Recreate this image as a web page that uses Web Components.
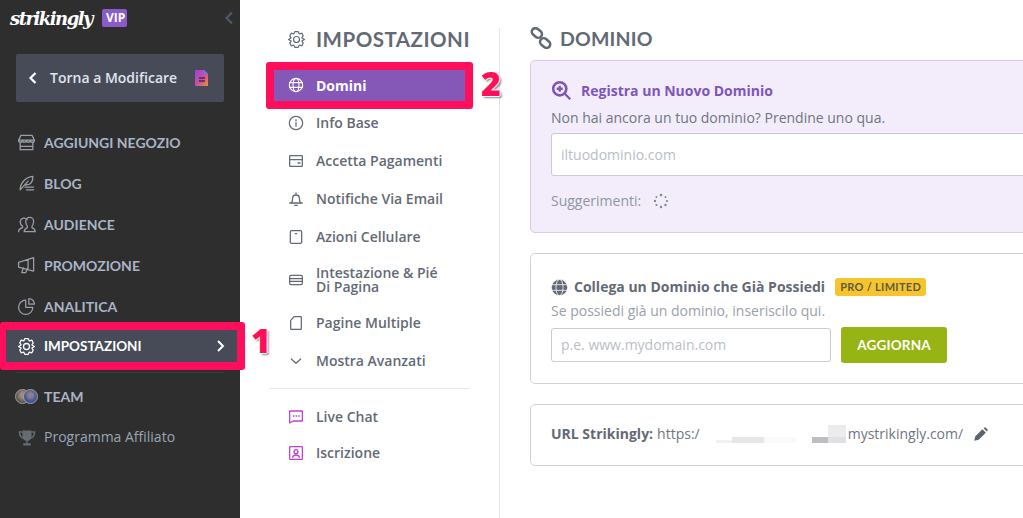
<!DOCTYPE html>
<html>
<head>
<meta charset="utf-8">
<style>
  html, body { margin: 0; height: 100%; overflow: hidden; background: #fff; }
  body { font-family: "Open Sans", sans-serif; }
</style>
</head>
<body>
<app-shell>
  <side-bar slot="side"></side-bar>
  <settings-menu slot="menu"></settings-menu>
  <domain-panel slot="main"></domain-panel>
</app-shell>
<script>
const icons = {
  store: '<path d="M5 3h14l3 6c0 1.500-1 2.500-2.500 2.500S17 10.500 17 9c0 1.500-1.500 2.500-2.500 2.500S12 10.500 12 9c0 1.500-1.500 2.500-2.500 2.500S7 10.500 7 9c0 1.500-1 2.500-2.500 2.500S2 10.500 2 9zM2 9h20M4 11.500V21h16v-9.500M4 17h16"/>',
  feather: '<path d="M4 20C4 11 11 4 20 3c0 5-2 9-5 10l-5 1M4 20l10-11M12 20h9M10 16.500h11"/>',
  users: '<path d="M2 21c0-3 2-4 5-5v-2c-2-1-3-3-3-6a5 5 0 0 1 9-2M9 21c0-3 2-4 4-5v-2c-1-1-2-3-2-6a5 5 0 0 1 10 0c0 3-1 5-2 6v2c2 1 4 2 4 5z"/>',
  megaphone: '<path d="M2 8l19-6v17L2 14zM2 8v6M8 15l-2 6h5l2-5M14 4v13"/>',
  pie: '<path d="M11 4a9 9 0 1 0 9 9h-9zM15 2a7 7 0 0 1 7 7h-7z"/>',
  gear: '<circle cx="12" cy="12" r="3.800"/><path d="M10 2h4l1.500 3 3.300-1 1.700 3.500L18.800 10 22 12l-3.200 2 1.700 2.500-1.700 3.500-3.300-1-1.500 3h-4l-1.500-3-3.300 1-1.700-3.500L5.200 14 2 12l3.200-2-1.700-2.500L5.200 4l3.300 1z"/>',
  globe: '<circle cx="12" cy="12" r="10"/><ellipse cx="12" cy="12" rx="4.500" ry="10"/><path d="M2.500 8.500h19M2.500 15.500h19"/>',
  info: '<circle cx="12" cy="12" r="10"/><path d="M12 11v6M12 7v1.500"/>',
  card: '<rect x="2.500" y="4" width="19" height="16" rx="1"/><path d="M2.500 10h19M15 15h3"/>',
  bell: '<path d="M5 18c1-2 2-3 2-7a5 5 0 0 1 10 0c0 4 1 5 2 7zM2.500 18h19M10 21.500h4M12 3v3"/>',
  phone: '<rect x="3.500" y="2.500" width="17" height="19" rx="2"/><path d="M11 7h2"/>',
  layout: '<rect x="2.500" y="5" width="19" height="14" rx="2"/><path d="M2.500 10h19M2.500 14h19"/>',
  page: '<path d="M9 2.500h10a1 1 0 0 1 1 1v17a1 1 0 0 1-1 1H5a1 1 0 0 1-1-1V8z"/>',
  chevdown: '<path d="M5 9l7 6.500L19 9"/>',
  chat: '<path d="M2.500 3h19v15H8l-5.500 3zM8 10.500h1M12 10.500h1M16 10.500h1"/>',
  badge: '<rect x="2.500" y="2.500" width="19" height="19" rx="1"/><circle cx="12" cy="10" r="3"/><path d="M7 18.500c1-3 3-3.500 5-3.500s4 .5 5 3.500"/>'
};
const svg = (name, size, color, sw = 1.7) =>
  `<svg width="${size}" height="${size}" viewBox="0 0 24 24" fill="none" stroke="${color}" stroke-width="${sw}" stroke-linejoin="round" stroke-linecap="round">${icons[name]}</svg>`;

class AppShell extends HTMLElement {
  constructor() {
    super();
    this.attachShadow({ mode: "open" }).innerHTML = `
      <style>
        :host { display: grid; grid-template-columns: 240px 260px 1fr; height: 518px; overflow: hidden; }
      </style>
      <slot name="side"></slot><slot name="menu"></slot><slot name="main"></slot>`;
  }
}

class NavItem extends HTMLElement {
  constructor() {
    super();
    const icon = this.getAttribute("icon");
    this.attachShadow({ mode: "open" }).innerHTML = `
      <style>
        :host { display: flex; align-items: center; height: 41px; padding-left: 17px; gap: 8px; color: #a9b4c6; font: 700 14px Lato, sans-serif; }
        .ic { width: 19px; height: 19px; display: flex; align-items: center; justify-content: center; }
      </style>
      <span class="ic">${icon ? svg(icon, 19, "#9a9fa8", 1.6) : '<slot name="icon"></slot>'}</span>
      <slot></slot>`;
  }
}

class SideBar extends HTMLElement {
  constructor() {
    super();
    this.attachShadow({ mode: "open" }).innerHTML = `
      <style>
        :host { display: block; background: #2e2e2e; height: 518px; position: relative; }
        .brand { display: flex; align-items: center; height: 36px; padding-left: 10px; gap: 8px; }
        .logo { color: #fff; font: italic 700 18px "DejaVu Serif", serif; letter-spacing: -1.500px; width: 84px; white-space: nowrap; }
        .vip { background: #8a5bc9; color: #fff; font: 700 12px "Open Sans", sans-serif; padding: 0 4px; width: 17px; text-align: center; border-radius: 2px; line-height: 18px; }
        .fold { margin-left: auto; margin-right: 6px; display: flex; }
        .back { margin: 18px 16px 0; height: 48px; background: #474b57; border-radius: 2px; display: flex; align-items: center; padding-left: 12px; color: #dfe5ee; font: 600 14px "Open Sans", sans-serif; }
        .back span { margin-left: 12px; flex: 1; padding-bottom: 2px; }
        .back svg:last-child { margin-right: 15px; }
        nav { margin-top: 20px; }
        .active { position: relative; margin-top: -5px; width: 245px; height: 48px; box-sizing: border-box; border: solid #ff0f5b; border-width: 8px 8px 8px 6px; border-radius: 3px; background: #474b57; display: flex; align-items: center; padding-left: 11px; gap: 8px; color: #fff; font: 700 13.500px Lato, sans-serif; }
        .active span { flex: 1; }
        .active svg:last-child { margin-right: 12px; }
        .rule { margin: 2px 16px 0; border-top: 1px solid #3c3c3c; }
        .low { margin-top: 3px; }
        .num { position: absolute; left: 251px; top: 321px; color: #ff0f5b; font: 800 34px "Open Sans", sans-serif; line-height: 38px; text-shadow: 1px 0 #fff, -1px 0 #fff, 0 1px #fff, 0 -1px #fff, 2px 2px 2px rgba(0,0,0,.45); }
        .faces { display: flex; }
        .faces i { width: 13px; height: 13px; border-radius: 50%; border: 1px solid #9aa0a8; background: radial-gradient(circle at 55% 40%, #a08a78 25%, #55504c 70%); display: block; }
        .faces i + i { margin-left: -7px; background: radial-gradient(circle at 50% 40%, #8a7f8c 22%, #3f5596 60%); }
        .aff { font: 400 14px "Open Sans", sans-serif; color: #9aa5b6; padding-bottom: 2px; }
      </style>
      <div class="brand">
        <span class="logo">strikingly</span><span class="vip">VIP</span>
        <span class="fold"><svg width="10" height="14" viewBox="0 0 10 14" fill="none" stroke="#4f5968" stroke-width="2.200"><path d="M8 1.500 2.500 7 8 12.500"/></svg></span>
      </div>
      <div class="back">
        <svg width="10" height="12" viewBox="0 0 10 12" fill="none" stroke="#fff" stroke-width="2.200"><path d="M7.500 1 2.500 6l5 5"/></svg>
        <span>Torna a Modificare</span>
        <svg width="15" height="16" viewBox="0 0 15 16"><defs><linearGradient id="g" x1="0" y1="0" x2="1" y2="1"><stop offset="0" stop-color="#8a46e0"/><stop offset=".55" stop-color="#d04fa0"/><stop offset="1" stop-color="#f09030"/></linearGradient></defs><path d="M1 0h9l4 4v12H1z" fill="url(#g)"/><path d="M10 0l4 4h-4z" fill="#5f7fe0"/><path d="M5 8h6M5 11h6" stroke="#3c3040" stroke-width="1.300"/></svg>
      </div>
      <nav>
        <nav-item icon="store">AGGIUNGI NEGOZIO</nav-item>
        <nav-item icon="feather">BLOG</nav-item>
        <nav-item icon="users">AUDIENCE</nav-item>
        <nav-item icon="megaphone">PROMOZIONE</nav-item>
        <nav-item icon="pie">ANALITICA</nav-item>
      </nav>
      <div class="active">
        ${svg("gear", 19, "#fff", 1.6)}
        <span>IMPOSTAZIONI</span>
        <svg width="9" height="12" viewBox="0 0 9 12" fill="none" stroke="#fff" stroke-width="2"><path d="M2 1l5 5-5 5"/></svg>
      </div>
      <div class="rule"></div>
      <div class="low">
        <nav-item><span slot="icon" class="faces"><i></i><i></i></span>TEAM</nav-item>
        <nav-item><svg slot="icon" width="18" height="18" viewBox="0 0 24 24" fill="#666c74"><path d="M6 2h12v8a6 6 0 0 1-12 0zM11 15h2v4h4v3H7v-3h4z"/><path d="M6 4H2c0 4 1 7 5 8M18 4h4c0 4-1 7-5 8" fill="none" stroke="#666c74" stroke-width="2"/></svg><span class="aff">Programma Affiliato</span></nav-item>
      </div>
      <div class="num">1</div>`;
  }
}

class MenuItem extends HTMLElement {
  constructor() {
    super();
    const color = this.getAttribute("color") || "#636a75";
    this.attachShadow({ mode: "open" }).innerHTML = `
      <style>
        :host { display: flex; align-items: center; min-height: 38px; gap: 12px; padding-left: 48px; color: #636a75; font: 600 14px/14px "Open Sans", sans-serif; }
        svg { flex: none; }
      </style>
      ${svg(this.getAttribute("icon"), 16, color, 1.9)}
      <span><slot></slot></span>`;
  }
}

class SettingsMenu extends HTMLElement {
  constructor() {
    super();
    this.attachShadow({ mode: "open" }).innerHTML = `
      <style>
        :host { display: block; height: 490px; box-sizing: border-box; border-right: 1px solid #e6e6e6; margin-top: 28px; position: relative; }
        h2 { margin: 0; height: 22px; display: flex; align-items: center; gap: 10px; padding-left: 47px; color: #636a75; font: 700 20.500px Lato, sans-serif; letter-spacing: .5px; }
        .current { margin: 12px 26px -5px 26px; height: 47px; box-sizing: border-box; border: 8px solid #ff0f5b; border-radius: 3px; background: #8558b8; display: flex; align-items: center; gap: 12px; padding: 0 0 1px 14px; color: #fff; font: 700 14px "Open Sans", sans-serif; position: relative; }
        .num { position: absolute; left: 241px; top: 36px; color: #ff0f5b; font: 800 34px "Open Sans", sans-serif; line-height: 38px; text-shadow: 1px 0 #fff, -1px 0 #fff, 0 1px #fff, 0 -1px #fff, 2px 2px 2px rgba(0,0,0,.45); }
        hr { margin: 8px 29px 10px 30px; border: 0; border-top: 1px solid #e9e9e9; }
      </style>
      <h2>${svg("gear", 19, "#636a75", 1.5)}IMPOSTAZIONI</h2>
      <div class="current">${svg("globe", 16, "#fff", 1.7)}Domini</div>
      <div class="num">2</div>
      <menu-item icon="info">Info Base</menu-item>
      <menu-item icon="card">Accetta Pagamenti</menu-item>
      <menu-item icon="bell">Notifiche Via Email</menu-item>
      <menu-item icon="phone">Azioni Cellulare</menu-item>
      <menu-item icon="layout" style="min-height:48px">Intestazione &amp; Pié<br>Di Pagina</menu-item>
      <menu-item icon="page">Pagine Multiple</menu-item>
      <menu-item icon="chevdown">Mostra Avanzati</menu-item>
      <hr>
      <menu-item icon="chat" color="#c03fd0" style="min-height:36px">Live Chat</menu-item>
      <menu-item icon="badge" color="#c03fd0" style="min-height:36px">Iscrizione</menu-item>`;
  }
}

class DomainCard extends HTMLElement {
  constructor() {
    super();
    this.attachShadow({ mode: "open" }).innerHTML = `
      <style>
        :host { display: block; box-sizing: border-box; border: 1px solid #cfd1d6; border-radius: 5px; padding: 20px; margin-bottom: 20px; margin-right: -60px; background: #fff; }
        :host([tone="purple"]) { background: #f3ecfb; border-color: #d9c8ef; }
      </style>
      <slot></slot>`;
  }
}

class DomainPanel extends HTMLElement {
  constructor() {
    super();
    this.attachShadow({ mode: "open" }).innerHTML = `
      <style>
        :host { display: block; padding: 27px 0 0 30px; height: 518px; box-sizing: border-box; overflow: hidden; color: #636a75; }
        h1 { margin: 0 0 11px; height: 22px; display: flex; align-items: center; gap: 8px; font: 700 19.500px Lato, sans-serif; letter-spacing: .2px; }
        .t { display: flex; align-items: center; font: 700 14px/18px "Open Sans", sans-serif; gap: 6px; }
        .t.new { color: #7e57b6; gap: 9px; height: 21px; }
        p { margin: 0; font: 400 14px/18px "Open Sans", sans-serif; color: #6f7681; }
        .hint { color: #9aa0aa; margin-top: 6px; }
        input { font: 400 14px "Open Sans", sans-serif; box-sizing: border-box; border: 1px solid #c9ccd3; border-radius: 3px; padding: 0 9px; background: #fff; outline: 0; }
        input::placeholder { color: #b9bec6; opacity: 1; }
        .big { width: 100%; height: 43px; margin-top: 6px; display: block; }
        .sug { display: flex; align-items: center; gap: 12px; margin-top: 16px; color: #8f96a1; font: 400 14px/18px "Open Sans", sans-serif; }
        .pill { background: #f6c52e; color: #5e5a45; font: 700 11px/18px Lato, sans-serif; padding: 0 5px; border-radius: 3px; margin-left: 4px; letter-spacing: .3px; }
        .row { display: flex; gap: 10px; margin-top: 7px; align-items: center; }
        .row input { width: 280px; height: 34px; padding-bottom: 2px; }
        button { width: 106px; height: 36px; border: 0; border-radius: 3px; background: #96b514; color: #fff; font: 700 13.500px Lato, sans-serif; letter-spacing: .2px; }
        .url { display: flex; align-items: center; font: 400 14px/18px "Open Sans", sans-serif; color: #6f7681; }
        .url b { color: #636a75; margin-right: 4px; font-weight: 700; }
        .mask { display: inline-block; position: relative; width: 148px; height: 18px; overflow: hidden; flex: none; }
        .mask i { position: absolute; display: block; }
      </style>
      <h1><svg width="22" height="22" viewBox="0 0 24 24" fill="none" stroke="#636a75" stroke-width="2.800"><rect x="1.500" y="2.500" width="12" height="8" rx="4" transform="rotate(40 7.500 6.500)"/><rect x="10.500" y="13.500" width="12" height="8" rx="4" transform="rotate(40 16.500 17.500)"/></svg>DOMINIO</h1>
      <domain-card tone="purple" style="height:173px;padding-top:19px">
        <div class="t new"><svg width="21" height="21" viewBox="0 0 24 24" fill="none" stroke="#7e57b6" stroke-width="3"><circle cx="10" cy="10" r="7.500"/><path d="M15.500 15.500 22 22M10 6.500v7M6.500 10h7" stroke-width="2.600"/></svg>Registra un Nuovo Dominio</div>
        <p style="margin-top:8px">Non hai ancora un tuo dominio? Prendine uno qua.</p>
        <input class="big" placeholder="iltuodominio.com">
        <div class="sug">Suggerimenti:
          <svg width="16" height="16" viewBox="0 0 16 16" fill="#80868f"><circle cx="8" cy="2" r="1.300"/><circle cx="12.500" cy="4" r=".9"/><circle cx="14" cy="8" r="1.100"/><circle cx="12.500" cy="12" r="1.200"/><circle cx="8" cy="14" r="1.200"/><circle cx="3.500" cy="12" r="1.100"/><circle cx="2" cy="8" r="1.200"/><circle cx="3.500" cy="4" r="1"/></svg>
        </div>
      </domain-card>
      <domain-card style="height:131px;padding-top:24px">
        <div class="t"><svg width="17" height="17" viewBox="0 0 24 24" fill="#636a75" stroke="#fff" stroke-width="1.100"><circle cx="12" cy="12" r="11.500"/><ellipse cx="12" cy="12" rx="5" ry="11.500" fill="none"/><path d="M1 8h22M1 16h22" fill="none"/></svg><span>Collega un Dominio che Già Possiedi</span><span class="pill">PRO / LIMITED</span></div>
        <p class="hint">Se possiedi già un dominio, inseriscilo qui.</p>
        <div class="row"><input placeholder="p.e. www.mydomain.com"><button>AGGIORNA</button></div>
      </domain-card>
      <domain-card style="height:62px;padding-top:20px">
        <div class="url"><b>URL Strikingly:</b> https:/<span class="mask"><i style="left:16px;top:15px;width:16px;height:6px;background:#f0f0f0"></i><i style="left:32px;top:12px;width:32px;height:6px;background:#e6e6e6"></i><i style="left:64px;top:12px;width:32px;height:6px;background:#f9f9f9"></i><i style="left:112px;top:12px;width:16px;height:6px;background:#bdbdc2"></i><i style="left:128px;top:0;width:18px;height:12px;background:#ebecee"></i><i style="left:128px;top:12px;width:18px;height:6px;background:#e1e1e3"></i></span>mystrikingly.com/
          <svg style="margin-left:10px" width="15" height="15" viewBox="0 0 24 24" fill="#5d636d"><path d="M2 22l1.500-7L15 3.500l5.500 5.500L9 20.500zM17 2l1-1a2 2 0 0 1 2.500 0L23 3.500a2 2 0 0 1 0 2.500l-1 1z"/></svg>
        </div>
      </domain-card>`;
  }
}

customElements.define("app-shell", AppShell);
customElements.define("nav-item", NavItem);
customElements.define("side-bar", SideBar);
customElements.define("menu-item", MenuItem);
customElements.define("settings-menu", SettingsMenu);
customElements.define("domain-card", DomainCard);
customElements.define("domain-panel", DomainPanel);
</script>
</body>
</html>
